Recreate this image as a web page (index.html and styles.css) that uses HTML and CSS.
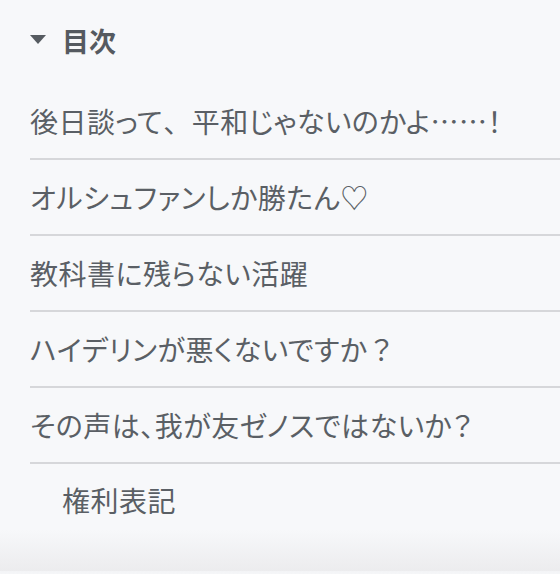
FILE: index.html
```html
<!DOCTYPE html>
<html lang="ja">
<head>
<meta charset="utf-8">
<link rel="stylesheet" href="styles.css">
</head>
<body>
<nav class="toc">
  <div class="toc-head">
    <svg class="caret" width="16" height="9" viewBox="0 0 16 9"><path d="M0 0H16L8 9Z" fill="#565b61"/></svg>
    <span class="toc-title">目次</span>
  </div>
  <ul class="toc-list">
    <li class="toc-item">後日談って<span class="fw">、</span>平和じゃないのかよ……！</li>
    <li class="toc-item">オルシュファンしか勝たん♡</li>
    <li class="toc-item">教科書に残らない活躍</li>
    <li class="toc-item">ハイデリンが悪くないですか<span class="fw">？</span></li>
    <li class="toc-item">その声は、我が友ゼノスではないか？</li>
    <li class="toc-item toc-sub">権利表記</li>
  </ul>
</nav>
<div class="shade"></div>
</body>
</html>
```
FILE: styles.css
```css
html, body {
  margin: 0;
  padding: 0;
  background: #f7f8fa;
}
body {
  width: 560px;
  height: 574px;
  overflow: hidden;
  display: flex;
  flex-direction: column;
  font-family: "Noto Sans CJK JP", "Noto Sans", sans-serif;
  color: #5a5f65;
}
.toc {
  padding: 21px 0 0 30px;
  flex: 1;
}
.toc-head {
  display: flex;
  align-items: center;
  height: 40px;
}
.caret {
  margin-right: 16px;
  margin-top: -3px;
}
.toc-title {
  font-size: 27px;
  font-weight: 700;
  color: #555a60;
  line-height: 40px;
}
.toc-list {
  list-style: none;
  margin: 23px 0 0;
  padding: 0;
}
.toc-item {
  font-size: 28px;
  line-height: 40px;
  padding: 17px 0 17px 0;
  border-bottom: 2px solid #d6d7da;
  font-feature-settings: "palt";
  letter-spacing: 0.5px;
  white-space: nowrap;
}
.fw {
  font-feature-settings: normal;
}
.toc-sub {
  border-bottom: none;
  padding: 16px 0 0 32px;
}
.shade {
  height: 44px;
  flex: none;
  background: linear-gradient(to bottom, #f7f8fa 0%, #ececee 92%, #f3f4f6 93%, #f5f6f8 100%);
}
```
